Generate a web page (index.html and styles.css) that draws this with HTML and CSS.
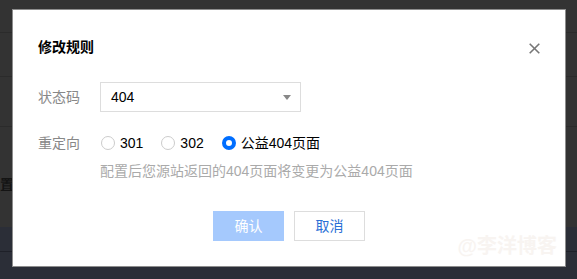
FILE: index.html
```html
<!DOCTYPE html>
<html lang="zh-CN">
<head>
    <meta charset="UTF-8">
    <meta name="viewport" content="width=device-width, initial-scale=1.0">
    <title>修改规则</title>
    <link rel="stylesheet" href="styles.css">
</head>
<body>
    <!-- page behind the mask -->
    <div class="page">
        <div class="page-row row-a"></div>
        <div class="page-row row-b"></div>
        <div class="page-row row-c"></div>
        <div class="page-row row-d"><span class="page-text">配置</span></div>
        <div class="page-foot">
            <div class="foot-line"></div>
        </div>
    </div>

    <div class="dialog">
        <div class="dialog-head">
            <h3 class="dialog-title">修改规则</h3>
            <button class="dialog-close" aria-label="关闭">
                <svg width="11" height="11" viewBox="0 0 11 11">
                    <path d="M0.7 0.7 L10.3 10.3 M10.3 0.7 L0.7 10.3" stroke="#777" stroke-width="1.6" fill="none"/>
                </svg>
            </button>
        </div>

        <div class="form">
            <div class="form-row">
                <label class="form-label">状态码</label>
                <div class="select">
                    <span>404</span>
                    <span class="select-arrow"></span>
                </div>
            </div>
            <div class="form-row radio-row">
                <label class="form-label">重定向</label>
                <div class="radios">
                    <label class="radio"><span class="radio-dot"></span>301</label>
                    <label class="radio"><span class="radio-dot"></span>302</label>
                    <label class="radio checked"><span class="radio-dot"></span>公益404页面</label>
                </div>
            </div>
            <p class="form-hint">配置后您源站返回的404页面将变更为公益404页面</p>
        </div>

        <div class="dialog-foot">
            <button class="btn btn-primary" disabled>确认</button>
            <button class="btn btn-default">取消</button>
        </div>

        <span class="watermark">@李洋博客</span>
    </div>
</body>
</html>
```

FILE: styles.css
```css
* {
    margin: 0;
    padding: 0;
    box-sizing: border-box;
}

body {
    font-family: "Liberation Sans", "Noto Sans CJK SC", sans-serif;
    font-size: 14px;
    line-height: 20px;
    color: #000;
    background-color: #333;
    width: 577px;
    height: 279px;
    overflow: hidden;
    position: relative;
}

/* Page behind the mask */
.page {
    display: flex;
    flex-direction: column;
    height: 100%;
}

.page-row {
    border-bottom: 1px solid #2b2b2b;
}

.row-a {
    height: 33px;
}

.row-b {
    height: 44px;
}

.row-c {
    height: 50px;
}

.row-d {
    height: 100px;
    display: flex;
    align-items: center;
    padding-top: 14px;
    border-bottom: none;
}

.page-text {
    margin-left: -14px;
    color: #141414;
    font-weight: bold;
}

.page-foot {
    flex: 1;
    background-color: #2b2e37;
    padding-top: 24px;
}

.foot-line {
    border-top: 1px solid #1e2028;
}

/* Dialog */
.dialog {
    position: absolute;
    left: 13px;
    top: 10px;
    width: 552px;
    height: 256px;
    background-color: #fff;
    box-shadow: 0 0 0 1px #8d8d8d;
    padding: 27px 25px 25px 25px;
}

.dialog-head {
    display: flex;
    justify-content: space-between;
    align-items: center;
}

.dialog-title {
    font-size: 14px;
    font-weight: bold;
    line-height: 20px;
    color: #000;
}

.dialog-close {
    border: none;
    background: none;
    width: 11px;
    height: 11px;
    display: flex;
    margin-top: 2px;
}

.form {
    margin-top: 25px;
}

.form-row {
    display: flex;
    align-items: center;
}

.radio-row {
    margin-top: 21px;
}

.form-label {
    width: 62px;
    color: #888;
}

.select {
    width: 201px;
    height: 30px;
    border: 1px solid #ddd;
    display: flex;
    align-items: center;
    justify-content: space-between;
    padding: 0 9px 0 10px;
    color: #000;
}

.select-arrow {
    width: 0;
    height: 0;
    border-left: 4px solid transparent;
    border-right: 4px solid transparent;
    border-top: 5px solid #888;
}

.radios {
    display: flex;
    gap: 18px;
    padding-left: 1px;
}

.radio {
    display: flex;
    align-items: center;
    gap: 5px;
    color: #000;
}

.radio-dot {
    width: 14px;
    height: 14px;
    border: 1px solid #ccc;
    border-radius: 50%;
    background-color: #fff;
}

.radio.checked .radio-dot {
    border: 4px solid #006eff;
}

.form-hint {
    margin-top: 8px;
    margin-left: 62px;
    color: #aaa;
}

/* Footer buttons */
.dialog-foot {
    display: flex;
    justify-content: center;
    gap: 10px;
    margin-top: 30px;
}

.btn {
    width: 71px;
    height: 30px;
    font-family: inherit;
    font-size: 14px;
    line-height: 20px;
}

.btn-primary {
    border: none;
    background-color: #a5c9fd;
    color: #fff;
}

.btn-default {
    border: 1px solid #ddd;
    background-color: #fff;
    color: #2a6fd6;
}

.watermark {
    position: absolute;
    right: 8px;
    bottom: 8px;
    font-size: 20px;
    line-height: 24px;
    font-weight: bold;
    color: #f8f4f1;
}
```
